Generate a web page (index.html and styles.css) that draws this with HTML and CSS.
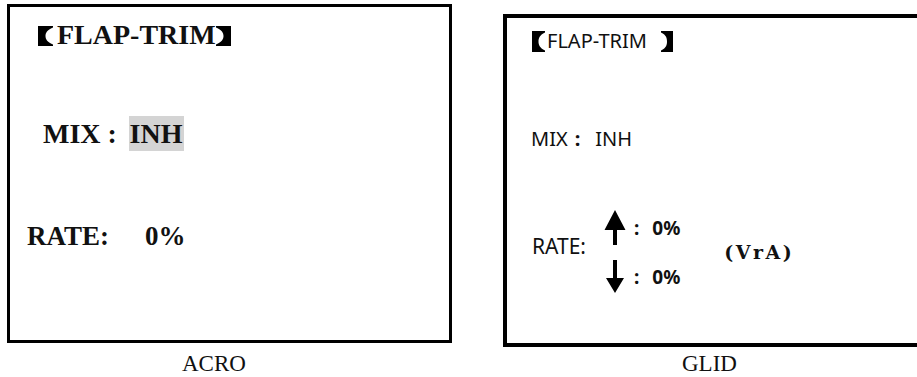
FILE: index.html
```html
<!DOCTYPE html>
<html>
<head>
<meta charset="utf-8">
<link rel="stylesheet" href="styles.css">
</head>
<body>
<div class="page">
  <div class="fig fig-acro">
    <div class="screen screen-acro">
      <div class="acro-title"><svg class="br br-l" width="15" height="20" viewBox="0 0 15 20"><path d="M0 0H15V1.5C9 4 7.5 7 7.5 10S9 16 15 18.5V20H0Z" fill="#000"/></svg><span class="t-text">FLAP-TRIM</span><svg class="br" width="15" height="20" viewBox="0 0 15 20"><path d="M15 0H0V1.5C6 4 7.5 7 7.5 10S6 16 0 18.5V20H15Z" fill="#000"/></svg></div>
      <div class="acro-mix">MIX<span class="acol-l">:</span><span class="sel">INH</span></div>
      <div class="acro-rate">RATE:<span class="acro-val">0%</span></div>
    </div>
    <div class="caption cap-acro">ACRO</div>
  </div>
  <div class="fig fig-glid">
    <div class="screen screen-glid">
      <div class="glid-title"><svg class="br-g" width="13" height="21" viewBox="0 0 13 21"><path d="M0 0H13V1.5C7.5 4 6.5 7.5 6.5 10.5S7.5 17 13 19.5V21H0Z" fill="#000"/></svg><span class="g-text">FLAP-TRIM</span><svg class="br-g br-gr" width="12" height="21" viewBox="0 0 12 21"><path d="M12 0H0V1.5C5.5 4 6 7.5 6 10.5S5.5 17 0 19.5V21H12Z" fill="#000"/></svg></div>
      <div class="glid-mix">MIX<span class="gcol">:</span>INH</div>
      <div class="glid-rate">
        <div class="rate-label">RATE:</div>
        <div class="arrows">
          <div class="arow">
            <svg class="arrow" width="22" height="35" viewBox="0 0 22 35"><polygon points="11,0 21.5,20 13,20 13,35 9,35 9,20 0.5,20" fill="#000"/></svg>
            <span class="acol">:</span><span class="aval">0%</span>
          </div>
          <div class="arow">
            <svg class="arrow" width="22" height="34" viewBox="0 0 22 34"><polygon points="9,0 13,0 13,18 20,18 11,33 2,18 9,18" fill="#000"/></svg>
            <span class="acol">:</span><span class="aval">0%</span>
          </div>
        </div>
        <div class="vra">(VrA)</div>
      </div>
    </div>
    <div class="caption cap-glid">GLID</div>
  </div>
</div>
</body>
</html>
```
FILE: styles.css
```css
html, body {
  margin: 0;
  padding: 0;
  background: #fff;
  overflow: hidden;
}
.page {
  display: flex;
  align-items: flex-start;
  width: 917px;
  height: 377px;
  overflow: hidden;
  color: #111;
}
.fig {
  display: flex;
  flex-direction: column;
  flex: none;
}
.fig-acro {
  margin-left: 7px;
  margin-top: 4px;
}
.fig-glid {
  margin-left: 51px;
  margin-top: 14px;
}
.screen {
  box-sizing: border-box;
  background: #fff;
}
.screen-acro {
  width: 445px;
  height: 339px;
  border: 3px solid #000;
  font-family: "Liberation Serif", "Times New Roman", serif;
  font-weight: bold;
  padding-top: 13px;
}
.screen-glid {
  width: 440px;
  height: 333px;
  border: 4px solid #000;
  border-right: none;
  font-family: "Noto Sans", "DejaVu Sans", sans-serif;
  padding-top: 9px;
}
.acro-title {
  font-size: 28px;
  line-height: 30px;
  height: 30px;
  padding-left: 28px;
  white-space: nowrap;
}
.br {
  vertical-align: -2px;
}
.t-text {
  margin-left: 4px;
}
.acro-mix {
  margin-top: 69px;
  font-size: 28px;
  line-height: 30px;
  height: 30px;
  padding-left: 33px;
  white-space: nowrap;
}
.acol-l {
  display: inline-block;
  width: 28px;
  padding-left: 7px;
  box-sizing: border-box;
}
.sel {
  background: #d4d4d4;
  padding: 2px 2px 2px 1px;
}
.acro-rate {
  margin-top: 72px;
  font-size: 27px;
  line-height: 30px;
  height: 30px;
  padding-left: 17px;
  white-space: nowrap;
}
.acro-val {
  margin-left: 36px;
}
.glid-title {
  font-size: 20px;
  line-height: 28px;
  height: 28px;
  padding-left: 25px;
  white-space: nowrap;
}
.br-g {
  vertical-align: -4px;
}
.g-text {
  margin-left: 2px;
}
.br-gr {
  margin-left: 14px;
}
.glid-mix {
  margin-top: 70px;
  font-size: 20px;
  line-height: 28px;
  height: 28px;
  padding-left: 24px;
  white-space: nowrap;
}
.gcol {
  font-weight: bold;
  margin-left: 7px;
  margin-right: 15px;
}
.glid-rate {
  display: flex;
  align-items: flex-start;
  margin-top: 57px;
  padding-left: 25px;
}
.rate-label {
  width: 72px;
  margin-top: 22px;
  font-size: 21px;
  line-height: 28px;
}
.arrows {
  display: flex;
  flex-direction: column;
  gap: 15px;
}
.arow {
  display: flex;
  align-items: center;
  height: 35px;
  font-size: 19px;
  font-weight: bold;
  line-height: 24px;
}
.arow + .arow {
  height: 34px;
}
.arrow {
  display: block;
  flex: none;
}
.acol {
  margin-left: 8px;
}
.aval {
  margin-left: 13px;
}
.vra {
  margin-left: 44px;
  margin-top: 29px;
  font-family: "DejaVu Serif", "Liberation Serif", serif;
  font-weight: bold;
  font-size: 19px;
  letter-spacing: 2.5px;
  line-height: 26px;
}
.caption {
  font-family: "Liberation Serif", "Times New Roman", serif;
  font-size: 23px;
  line-height: 26px;
  color: #111;
}
.cap-acro {
  margin-top: 8px;
  padding-left: 175px;
}
.cap-glid {
  margin-top: 4px;
  padding-left: 179px;
}
```
